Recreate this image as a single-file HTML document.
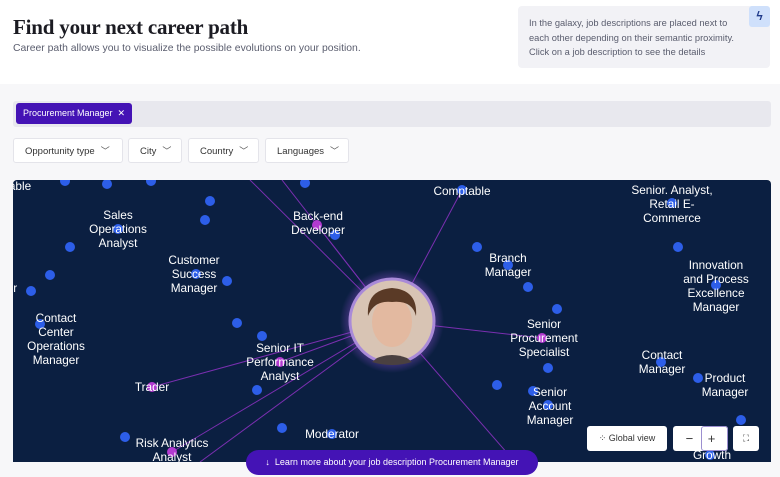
<!DOCTYPE html>
<html><head><style>
body{margin:0;width:780px;height:477px;overflow:hidden;background:#f7f7f9;font-family:"Liberation Sans",sans-serif;position:relative}
.top{position:absolute;left:0;top:0;width:780px;height:84px;background:#fff}
h1{position:absolute;left:13px;top:15px;margin:0;font-family:"Liberation Serif",serif;font-weight:bold;font-size:21px;color:#1b1b22;letter-spacing:-0.2px}
.sub{position:absolute;left:13px;top:43px;font-size:10.4px;color:#5a5d6e}
.info{position:absolute;left:518px;top:6px;width:252px;height:62px;background:#f2f2f6;border-radius:4px;font-size:9.3px;color:#5a5d6e;line-height:14.5px;padding:10px 0 0 11px;box-sizing:border-box}
.bolt{position:absolute;left:749px;top:6px;width:21px;height:21px;background:#cfe0fb;border-radius:3px;color:#1f3a8a;font-size:12px;text-align:center;line-height:21px;font-weight:bold}
.search{position:absolute;left:13px;top:101px;width:758px;height:26px;background:#e8e8ee;border-radius:3px}
.chip{position:absolute;left:16px;top:103px;height:21px;padding:0 7px;background:#4413b5;color:#fff;font-size:9px;line-height:21px;border-radius:3px}
.f{position:absolute;top:138px;height:25px;background:#fff;border:1px solid #e4e4ea;border-radius:3px;font-size:9.5px;color:#333;line-height:25px;box-sizing:border-box;padding-left:11px}
.f span{font-size:9px;margin-left:6px;color:#555}
.g{position:absolute;left:13px;top:180px;width:758px;height:282px;background:#0b1f41;border-radius:4px 4px 0 0;overflow:hidden}
.btn{position:absolute;background:#fff;border-radius:3px;font-size:9px;color:#333;text-align:center}
.learn{position:absolute;left:246px;top:450px;width:292px;height:25px;background:#4413b5;color:#fff;font-size:9px;border-radius:13px;line-height:25px;text-align:center}
</style></head><body>
<div class="top"></div>
<h1>Find your next career path</h1>
<div class="sub">Career path allows you to visualize the possible evolutions on your position.</div>
<div class="info">In the galaxy, job descriptions are placed next to<br>each other depending on their semantic proximity.<br>Click on a job description to see the details</div>
<div class="bolt">ϟ</div>
<div class="search"></div>
<div class="chip">Procurement Manager &nbsp;✕</div>
<div class="f" style="left:13px;width:110px">Opportunity type<span>﹀</span></div>
<div class="f" style="left:128px;width:54px">City<span>﹀</span></div>
<div class="f" style="left:188px;width:71px">Country<span>﹀</span></div>
<div class="f" style="left:265px;width:84px">Languages<span>﹀</span></div>
<div class="g">
<svg width="758" height="282" viewBox="13 180 758 282" xmlns="http://www.w3.org/2000/svg" font-family="Liberation Sans, sans-serif" font-size="11.8" fill="#fff">
<defs><radialGradient id="gl"><stop offset="0.7" stop-color="#8b4fd0" stop-opacity="0.6"/><stop offset="1" stop-color="#8b4fd0" stop-opacity="0"/></radialGradient></defs>
<g stroke="#7a2fb0" stroke-width="1">
<line x1="392" y1="321" x2="250" y2="180"/><line x1="392" y1="321" x2="282" y2="180"/>
<line x1="392" y1="321" x2="317" y2="225"/><line x1="392" y1="321" x2="462" y2="190"/>
<line x1="392" y1="321" x2="542" y2="338"/><line x1="392" y1="321" x2="152" y2="387"/>
<line x1="392" y1="321" x2="280" y2="362"/><line x1="392" y1="321" x2="172" y2="452"/>
<line x1="392" y1="321" x2="200" y2="462"/><line x1="392" y1="321" x2="515" y2="462"/>
</g>
<g fill="#2d5ee8">
<circle cx="65" cy="181" r="5"/><circle cx="107" cy="184" r="5"/><circle cx="151" cy="181" r="5"/><circle cx="210" cy="201" r="5"/><circle cx="205" cy="220" r="5"/><circle cx="70" cy="247" r="5"/><circle cx="50" cy="275" r="5"/><circle cx="31" cy="291" r="5"/><circle cx="118" cy="229" r="5"/><circle cx="237" cy="323" r="5"/><circle cx="262" cy="336" r="5"/><circle cx="257" cy="390" r="5"/><circle cx="125" cy="437" r="5"/><circle cx="282" cy="428" r="5"/><circle cx="305" cy="183" r="5"/><circle cx="335" cy="235" r="5"/><circle cx="477" cy="247" r="5"/><circle cx="528" cy="287" r="5"/><circle cx="557" cy="309" r="5"/><circle cx="548" cy="368" r="5"/><circle cx="497" cy="385" r="5"/><circle cx="533" cy="391" r="5"/><circle cx="678" cy="247" r="5"/><circle cx="716" cy="285" r="5"/><circle cx="698" cy="378" r="5"/><circle cx="661" cy="362" r="5"/><circle cx="741" cy="420" r="5"/><circle cx="710" cy="455" r="5"/><circle cx="332" cy="434" r="5"/><circle cx="462" cy="190" r="5"/><circle cx="508" cy="265" r="5"/><circle cx="227" cy="281" r="5"/><circle cx="40" cy="324" r="5"/><circle cx="548" cy="405" r="5"/><circle cx="672" cy="203" r="5"/><circle cx="196" cy="274" r="5"/>
</g>
<g fill="#b23ad0"><circle cx="317" cy="225" r="5"/><circle cx="280" cy="362" r="5"/><circle cx="152" cy="387" r="5"/><circle cx="542" cy="338" r="5"/><circle cx="172" cy="452" r="5"/></g>
<circle cx="392" cy="321" r="52" fill="url(#gl)"/>
<circle cx="392" cy="321" r="42" fill="#d8c4b4" stroke="#a98ad8" stroke-width="3"/>
<path d="M377 358 Q392 352 407 358 L412 362 Q392 368 372 362Z" fill="#4a4040"/>
<ellipse cx="392" cy="322" rx="20" ry="25" fill="#e3b9a0"/>
<path d="M368 316 Q366 290 392 288 Q418 290 416 316 Q412 300 392 302 Q374 300 368 316Z" fill="#5a3a26"/>
<g text-anchor="middle">
<text x="20" y="190">able</text>
<text x="118" y="219">Sales</text><text x="118" y="233">Operations</text><text x="118" y="247">Analyst</text>
<text x="318" y="220">Back-end</text><text x="318" y="234">Developer</text>
<text x="462" y="195">Comptable</text>
<text x="672" y="194">Senior. Analyst,</text><text x="672" y="208">Retail E-</text><text x="672" y="222">Commerce</text>
<text x="508" y="262">Branch</text><text x="508" y="276">Manager</text>
<text x="194" y="264">Customer</text><text x="194" y="278">Success</text><text x="194" y="292">Manager</text>
<text x="716" y="269">Innovation</text><text x="716" y="283">and Process</text><text x="716" y="297">Excellence</text><text x="716" y="311">Manager</text>
<text x="56" y="322">Contact</text><text x="56" y="336">Center</text><text x="56" y="350">Operations</text><text x="56" y="364">Manager</text>
<text x="544" y="328">Senior</text><text x="544" y="342">Procurement</text><text x="544" y="356">Specialist</text>
<text x="280" y="352">Senior IT</text><text x="280" y="366">Performance</text><text x="280" y="380">Analyst</text>
<text x="662" y="359">Contact</text><text x="662" y="373">Manager</text>
<text x="725" y="382">Product</text><text x="725" y="396">Manager</text>
<text x="152" y="391">Trader</text>
<text x="550" y="396">Senior</text><text x="550" y="410">Account</text><text x="550" y="424">Manager</text>
<text x="332" y="438">Moderator</text>
<text x="172" y="447">Risk Analytics</text><text x="172" y="461">Analyst</text>
<text x="712" y="459">Growth</text>
<text x="10" y="276">s</text><text x="12" y="292">er</text>
</g>
</svg>
</div>
<div class="btn" style="left:587px;top:426px;width:80px;height:25px;line-height:25px">⁘ Global view</div>
<div class="btn" style="left:673px;top:426px;width:55px;height:25px;line-height:25px;font-size:13px">−&nbsp;&nbsp;&nbsp;&nbsp;+</div>
<div style="position:absolute;left:701px;top:426px;width:25px;height:23px;border:1px solid #9c8fd0;border-radius:3px"></div>
<div class="btn" style="left:733px;top:426px;width:26px;height:25px;line-height:25px">⛶</div>
<div class="learn">↓&nbsp;&nbsp;Learn more about your job description Procurement Manager</div>
</body></html>
